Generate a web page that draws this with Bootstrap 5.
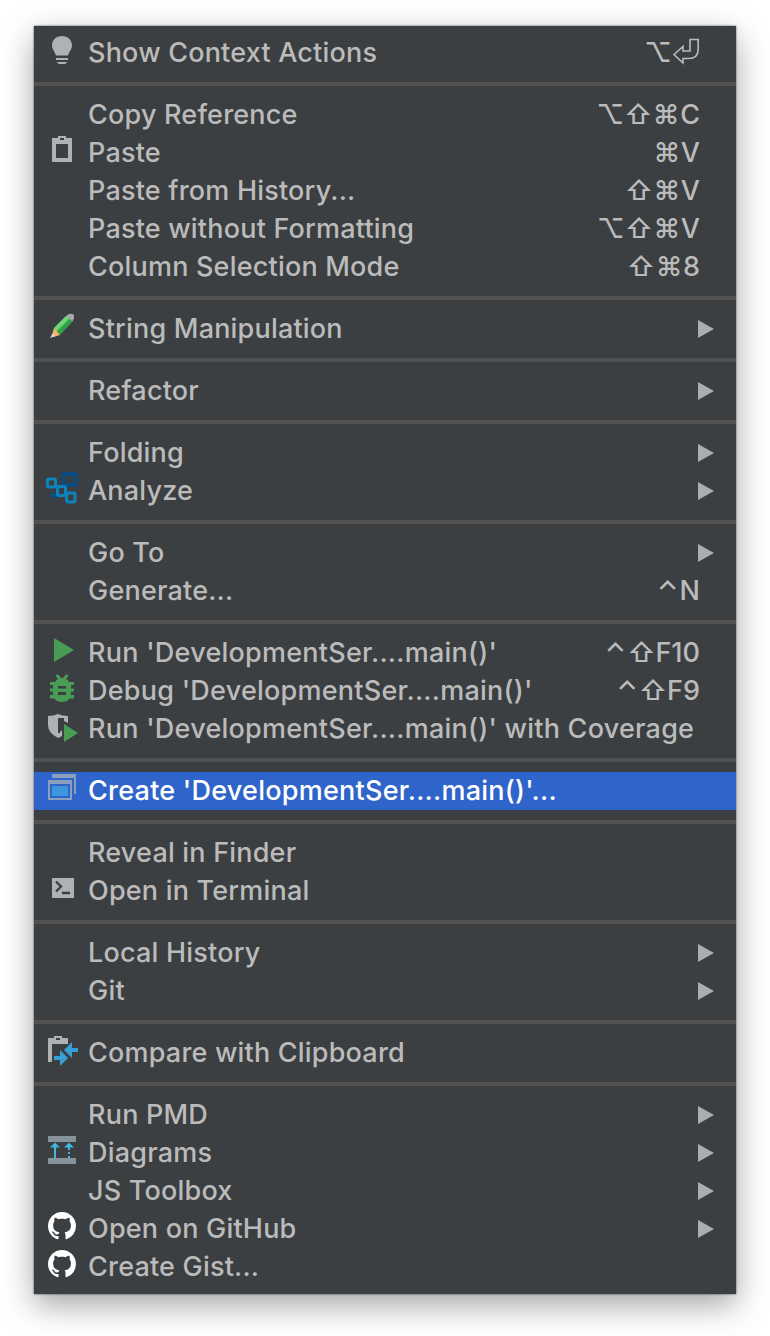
<!DOCTYPE html>
<html lang="en">
<head>
<meta charset="utf-8">
<title>Editor context menu</title>
<link href="https://cdn.jsdelivr.net/npm/bootstrap@5.3.0/dist/css/bootstrap.min.css" rel="stylesheet">
<script src="https://cdn.jsdelivr.net/npm/bootstrap@5.3.0/dist/js/bootstrap.bundle.min.js"></script>
<style>
body{background:#fff;padding:26px 34px 42px;font-family:Inter,"Liberation Sans",sans-serif;overflow:hidden}
.ctx{--bs-dropdown-bg:#3c3f41;--bs-dropdown-color:#bbb;width:702px;padding:8px 0;background:#3c3f41;border:0;border-radius:0;box-shadow:0 0 2px rgba(0,0,0,.65),0 11px 30px rgba(0,0,0,.36)}
.ctx .dropdown-item{height:38px;padding:0 22px 0 12px;color:#bbb;font-size:27px;font-weight:450;line-height:38px;letter-spacing:.2px}
.ctx .dropdown-item.active{background:#2f65ca;color:#fff}
.ctx .dropdown-divider{height:4px;margin:10px 0;border:0;background:#515151;opacity:1}
.ico{width:32px;height:32px;margin-right:10px;flex:none;align-self:flex-start}
.lbl{flex:1 1 auto}
.code-name{letter-spacing:.24px}
.keys{margin-right:14px;display:flex;letter-spacing:0}
.keys i{font-style:normal;width:28px;display:flex;justify-content:center}
.keys .ctl{width:24px}
.ret{width:28px;height:38px}
.arr{width:16px;height:18px;fill:#adadad;flex:none}
</style>
</head>
<body>
<svg class="d-none">
<symbol id="sub" viewBox="0 0 16 18"><path d="M0 0L16 9L0 18z"/></symbol>
<symbol id="gh" viewBox="0 0 16 16"><path fill="#fff" transform="translate(1 1) scale(.875)" d="M8 0C3.58 0 0 3.58 0 8c0 3.54 2.29 6.53 5.47 7.59.4.07.55-.17.55-.38 0-.19-.01-.82-.01-1.49-2.01.37-2.53-.49-2.69-.94-.09-.23-.48-.94-.82-1.13-.28-.15-.68-.52-.01-.53.63-.01 1.08.58 1.23.82.72 1.21 1.87.87 2.33.66.07-.52.28-.87.51-1.07-1.78-.2-3.64-.89-3.64-3.95 0-.87.31-1.59.82-2.15-.08-.2-.36-1.02.08-2.12 0 0 .67-.21 2.2.82.64-.18 1.32-.27 2-.27s1.36.09 2 .27c1.53-1.04 2.2-.82 2.2-.82.44 1.1.16 1.92.08 2.12.51.56.82 1.27.82 2.15 0 3.07-1.87 3.75-3.65 3.95.29.25.54.73.54 1.48 0 1.07-.01 1.93-.01 2.2 0 .21.15.46.55.38A8.01 8.01 0 0 0 16 8c0-4.42-3.58-8-8-8z"/></symbol>
</svg>
<div class="dropdown-menu ctx d-block position-static">
<a class="dropdown-item d-flex align-items-center"><svg class="ico" viewBox="0 0 32 32" fill="#afb1b3"><path d="M16 2C10 2 6 6.2 6 11.500C6 15 8.500 17 10 21.500H22C23.500 17 26 15 26 11.500C26 6.200 22 2 16 2zM10 24h12v2H10zM11 28h10q-.5 2-2.500 2h-5Q11.500 30 11 28z"/></svg><span class="lbl">Show Context Actions</span><span class="keys"><i>⌥</i><svg class="ret" viewBox="0 0 28 38" fill="none" stroke="#bbb" stroke-width="1.600"><path d="M2 20.500L11 12.500V17H18V5.500H26.200V15Q26.200 24.500 16.500 24.500H11V29z"/></svg></span></a>
<hr class="dropdown-divider">
<a class="dropdown-item d-flex align-items-center"><span class="ico"></span><span class="lbl">Copy Reference</span><span class="keys"><i>⌥</i><i>⇧</i><i>⌘</i>C</span></a>
<a class="dropdown-item d-flex align-items-center"><svg class="ico" viewBox="0 0 16 16"><path fill="#afb1b3" fill-rule="evenodd" d="M3 2h3V1h4v1h3v12H3zM7 2h2v1H7zM5 5h6v7H5z"/></svg><span class="lbl">Paste</span><span class="keys"><i>⌘</i>V</span></a>
<a class="dropdown-item d-flex align-items-center"><span class="ico"></span><span class="lbl">Paste from History...</span><span class="keys"><i>⇧</i><i>⌘</i>V</span></a>
<a class="dropdown-item d-flex align-items-center"><span class="ico"></span><span class="lbl">Paste without Formatting</span><span class="keys"><i>⌥</i><i>⇧</i><i>⌘</i>V</span></a>
<a class="dropdown-item d-flex align-items-center"><span class="ico"></span><span class="lbl">Column Selection Mode</span><span class="keys"><i>⇧</i><i>⌘</i>8</span></a>
<hr class="dropdown-divider">
<a class="dropdown-item d-flex align-items-center"><svg class="ico" viewBox="0 0 32 32"><path fill="#35a04b" d="M8 18L20 6L27 11L14 25z"/><path fill="#6ed675" d="M8 18L20 6L23.500 8.500L10.500 21.500z"/><path fill="#a5a5ab" d="M20 6L23 4Q26 3 28 5V8.500L26.500 11.500z"/><path fill="#f2b56b" d="M8 18L14 25L7.500 27L6 25z"/><path fill="#ddd" d="M6.500 23.500L9 26L4 28z"/></svg><span class="lbl">String Manipulation</span><svg class="arr"><use href="#sub"/></svg></a>
<hr class="dropdown-divider">
<a class="dropdown-item d-flex align-items-center"><span class="ico"></span><span class="lbl">Refactor</span><svg class="arr"><use href="#sub"/></svg></a>
<hr class="dropdown-divider">
<a class="dropdown-item d-flex align-items-center"><span class="ico"></span><span class="lbl">Folding</span><svg class="arr"><use href="#sub"/></svg></a>
<a class="dropdown-item d-flex align-items-center"><svg class="ico" viewBox="0 0 32 32" fill="none"><rect x="17.500" y="2" width="12" height="11" rx="1" stroke="#0a4c85" stroke-width="4"/><circle cx="7.500" cy="23.500" r="3" fill="#12507c" stroke="#0d4a7c"/><g stroke="#0d83bd" stroke-width="3"><rect x="1.500" y="7" width="8" height="8" rx="1.500"/><rect x="11.500" y="14.500" width="8" height="9" rx="1.500"/><rect x="20.500" y="21" width="8.500" height="9" rx="1.500"/></g></svg><span class="lbl">Analyze</span><svg class="arr"><use href="#sub"/></svg></a>
<hr class="dropdown-divider">
<a class="dropdown-item d-flex align-items-center"><span class="ico"></span><span class="lbl">Go To</span><svg class="arr"><use href="#sub"/></svg></a>
<a class="dropdown-item d-flex align-items-center"><span class="ico"></span><span class="lbl">Generate...</span><span class="keys"><i class="ctl">⌃</i>N</span></a>
<hr class="dropdown-divider">
<a class="dropdown-item d-flex align-items-center"><svg class="ico" viewBox="0 0 32 32"><path fill="#499c54" d="M8 4L28 16L8 28z"/></svg><span class="lbl code-name">Run 'DevelopmentSer....main()'</span><span class="keys"><i class="ctl">⌃</i><i>⇧</i>F10</span></a>
<a class="dropdown-item d-flex align-items-center"><svg class="ico" viewBox="0 0 32 32"><path d="M10.500 3L15 8M21.500 3L17 8" stroke="#499c54" stroke-width="2.800"/><path fill="#499c54" fill-rule="evenodd" d="M4 10h5Q11 6 16 6T23 10h5v3H25v3.500h3v3H25V23h3v3.500H23.500Q21 30 16 30T8.500 26.500H4V23H7V19.500H4v-3H7V13H4zM12 14v2.500h8V14zM12 20v3h8V20z"/></svg><span class="lbl code-name">Debug 'DevelopmentSer....main()'</span><span class="keys"><i class="ctl">⌃</i><i>⇧</i>F9</span></a>
<a class="dropdown-item d-flex align-items-center"><svg class="ico" viewBox="0 0 32 32"><path fill="#afb1b3" d="M2 6Q8 6 12 4Q16 6 22 6V13L18 11V8H12V23H14V22L16 20V26L12 28Q2 23 2 15z"/><path fill="#499c54" d="M18 14L32 23L18 32z"/></svg><span class="lbl code-name">Run 'DevelopmentSer....main()' with Coverage</span></a>
<hr class="dropdown-divider">
<a class="dropdown-item active d-flex align-items-center"><svg class="ico" viewBox="0 0 32 32"><path fill="#8b9fbd" fill-rule="evenodd" d="M6 2H30V22H28V6H6zM2 8H26V28H2zM4 12H24V26H4z"/><path fill="#3d97dc" d="M6 14H22V24H6z"/></svg><span class="lbl code-name">Create 'DevelopmentSer....main()'...</span></a>
<hr class="dropdown-divider">
<a class="dropdown-item d-flex align-items-center"><span class="ico"></span><span class="lbl">Reveal in Finder</span></a>
<a class="dropdown-item d-flex align-items-center"><svg class="ico" viewBox="0 0 32 32"><path fill="#afb1b3" d="M6 6H28V26H6z"/><path d="M10 9.500L15 14.500L10 19.500M16 21H24" stroke="#3c3f41" stroke-width="2.300" fill="none"/></svg><span class="lbl">Open in Terminal</span></a>
<hr class="dropdown-divider">
<a class="dropdown-item d-flex align-items-center"><span class="ico"></span><span class="lbl">Local History</span><svg class="arr"><use href="#sub"/></svg></a>
<a class="dropdown-item d-flex align-items-center"><span class="ico"></span><span class="lbl">Git</span><svg class="arr"><use href="#sub"/></svg></a>
<hr class="dropdown-divider">
<a class="dropdown-item d-flex align-items-center"><svg class="ico" viewBox="0 0 32 32"><path fill="#afb1b3" fill-rule="evenodd" d="M2 4H8V2H16V4H22V10H6V28H2zM10 4V6H14V4z"/><path fill="#389fd6" d="M18 16L26 8V14H32V18H26V24zM22 24L14 32V26H8V22H14V16z"/></svg><span class="lbl">Compare with Clipboard</span></a>
<hr class="dropdown-divider">
<a class="dropdown-item d-flex align-items-center"><span class="ico"></span><span class="lbl">Run PMD</span><svg class="arr"><use href="#sub"/></svg></a>
<a class="dropdown-item d-flex align-items-center"><svg class="ico" viewBox="0 0 32 32"><path fill="#87939a" d="M2 2H30V8H2zM2 24H30V30H2z"/><path fill="#40b6e0" d="M9 8.500L14 13.500H10V24H8V13.500H4zM23 8.500L28 13.500H24V16H22V13.500H18zM22 18h2v2h-2zM22 22h2v2h-2z"/></svg><span class="lbl">Diagrams</span><svg class="arr"><use href="#sub"/></svg></a>
<a class="dropdown-item d-flex align-items-center"><span class="ico"></span><span class="lbl">JS Toolbox</span><svg class="arr"><use href="#sub"/></svg></a>
<a class="dropdown-item d-flex align-items-center"><svg class="ico"><use href="#gh"/></svg><span class="lbl">Open on GitHub</span><svg class="arr"><use href="#sub"/></svg></a>
<a class="dropdown-item d-flex align-items-center"><svg class="ico"><use href="#gh"/></svg><span class="lbl">Create Gist...</span></a>
</div>
</body>
</html>
